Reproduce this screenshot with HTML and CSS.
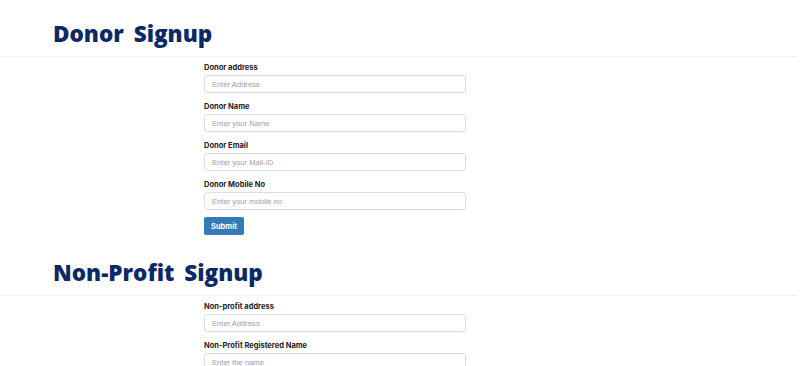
FILE: index.html
```html
<!DOCTYPE html>
<html lang="en">
<head>
    <meta charset="UTF-8">
    <meta name="viewport" content="width=device-width, initial-scale=1.0">
    <title>Signup</title>
    <link rel="stylesheet" href="styles.css">
</head>
<body>
    <section class="signup">
        <div class="signup-head">
            <h1>Donor Signup</h1>
        </div>
        <form class="signup-form">
            <div class="form-group">
                <label>Donor address</label>
                <input type="text" placeholder="Enter Address">
            </div>
            <div class="form-group">
                <label>Donor Name</label>
                <input type="text" placeholder="Enter your Name">
            </div>
            <div class="form-group">
                <label>Donor Email</label>
                <input type="text" placeholder="Enter your Mail-ID">
            </div>
            <div class="form-group">
                <label>Donor Mobile No</label>
                <input type="text" placeholder="Enter your mobile no">
            </div>
            <button type="button" class="submit-btn">Submit</button>
        </form>
    </section>

    <section class="signup">
        <div class="signup-head">
            <h1>Non-Profit Signup</h1>
        </div>
        <form class="signup-form">
            <div class="form-group">
                <label>Non-profit address</label>
                <input type="text" placeholder="Enter Address">
            </div>
            <div class="form-group">
                <label>Non-Profit Registered Name</label>
                <input type="text" placeholder="Enter the name">
            </div>
            <div class="form-group">
                <label>Non-Profit Email</label>
                <input type="text" placeholder="Enter the Mail-ID">
            </div>
            <div class="form-group">
                <label>Non-Profit Mobile No</label>
                <input type="text" placeholder="Enter the mobile no">
            </div>
            <button type="button" class="submit-btn">Submit</button>
        </form>
    </section>
</body>
</html>
```

FILE: styles.css
```css
* {
    margin: 0;
    padding: 0;
    box-sizing: border-box;
}

body {
    font-family: "Inter", Arial, sans-serif;
    background-color: #fff;
    color: #222;
    padding-bottom: 40px;
}

.signup {
    margin-bottom: 4px;
}

.signup-head {
    height: 57px;
    margin-right: 10px;
    padding-left: 53px;
    padding-top: 19px;
    border-bottom: 1px solid #f0f0f0;
}

.signup-head h1 {
    font-family: "Open Sans", sans-serif;
    font-size: 22.5px;
    font-weight: 800;
    line-height: 30px;
    word-spacing: 4px;
    color: #0a2966;
}

.signup-form {
    width: 262px;
    margin-left: 204px;
    padding-top: 4px;
}

.form-group {
    margin-bottom: 7px;
}

label {
    display: block;
    height: 13px;
    margin-bottom: 1px;
    font-size: 7.5px;
    font-weight: 700;
    line-height: 13px;
    color: #222;
}

input[type="text"] {
    display: block;
    width: 100%;
    height: 18px;
    padding: 0 7px;
    border: 1px solid #ddd;
    border-radius: 3px;
    font-family: "Liberation Sans", Arial, sans-serif;
    font-size: 7.6px;
    color: #555;
}

input::placeholder {
    color: #a0a0a0;
}

.submit-btn {
    display: block;
    width: 40px;
    height: 18px;
    margin-top: 7px;
    border: none;
    border-radius: 2px;
    background-color: #337ab7;
    color: #fff;
    font-family: "Inter", sans-serif;
    font-size: 7.5px;
    font-weight: 700;
    cursor: pointer;
}
```
